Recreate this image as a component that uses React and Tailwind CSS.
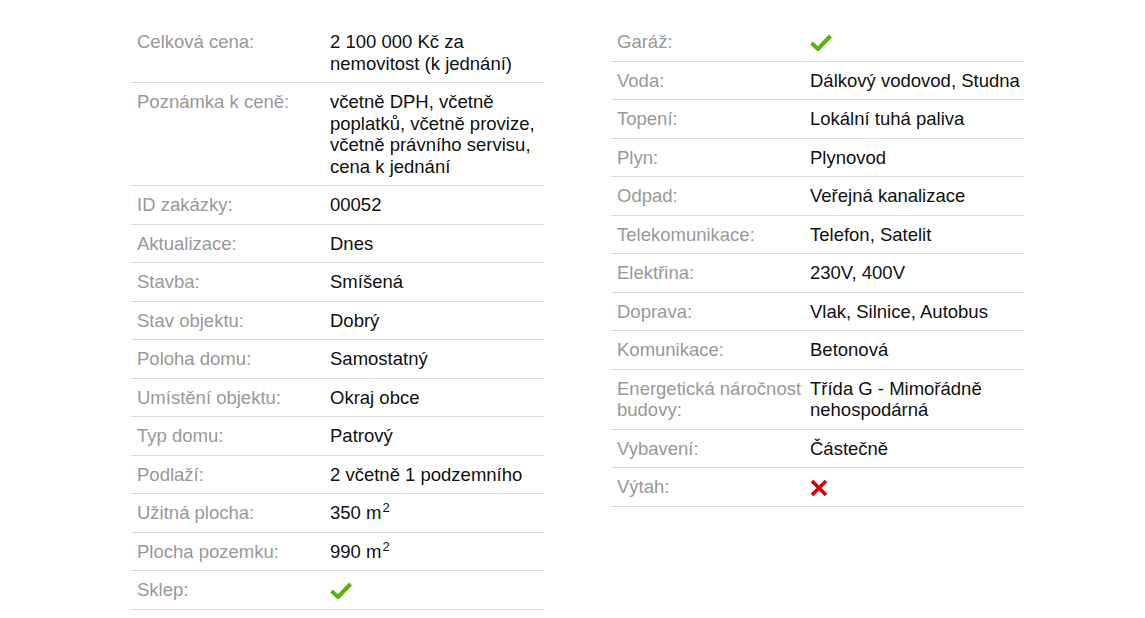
const Check = () => (
  <svg width="22" height="17" viewBox="0 0 22 17" className="mt-[3px]">
    <path d="M1.5 9 L8 15 L20.5 2" fill="none" stroke="#56b40c" strokeWidth="4" />
  </svg>
);

const Cross = () => (
  <svg width="18" height="18" viewBox="0 0 18 18" className="mt-[3px]">
    <path d="M2 2 L16 16 M16 2 L2 16" fill="none" stroke="#d30000" strokeWidth="3.6" />
  </svg>
);

const m2 = (n) => (
  <>
    {n} m<sup className="text-[13px] relative -top-[7px] ml-[1px]">2</sup>
  </>
);

const left = [
  ["Celková cena:", "2 100 000 Kč za nemovitost (k jednání)"],
  ["Poznámka k ceně:", "včetně DPH, včetně poplatků, včetně provize, včetně právního servisu, cena k jednání"],
  ["ID zakázky:", "00052"],
  ["Aktualizace:", "Dnes"],
  ["Stavba:", "Smíšená"],
  ["Stav objektu:", "Dobrý"],
  ["Poloha domu:", "Samostatný"],
  ["Umístění objektu:", "Okraj obce"],
  ["Typ domu:", "Patrový"],
  ["Podlaží:", "2 včetně 1 podzemního"],
  ["Užitná plocha:", m2(350)],
  ["Plocha pozemku:", m2(990)],
  ["Sklep:", <Check />],
];

const right = [
  ["Garáž:", <Check />],
  ["Voda:", "Dálkový vodovod, Studna"],
  ["Topení:", "Lokální tuhá paliva"],
  ["Plyn:", "Plynovod"],
  ["Odpad:", "Veřejná kanalizace"],
  ["Telekomunikace:", "Telefon, Satelit"],
  ["Elektřina:", "230V, 400V"],
  ["Doprava:", "Vlak, Silnice, Autobus"],
  ["Komunikace:", "Betonová"],
  ["Energetická náročnost budovy:", "Třída G - Mimořádně nehospodárná"],
  ["Vybavení:", "Částečně"],
  ["Výtah:", <Cross />],
];

const Table = ({ rows }) => (
  <div className="w-[413px]">
    {rows.map(([label, value], i) => (
      <div key={i} className="grid grid-cols-[199px_1fr] border-b border-[#dcdcdc] py-[8px]">
        <div className="pl-[6px] text-[#999999]">{label}</div>
        <div className="text-[#111111]">{value}</div>
      </div>
    ))}
  </div>
);

export default function App() {
  return (
    <div
      className="bg-white min-h-[618px] flex gap-[67px] pl-[131px] pt-[23px] text-[18.5px] leading-[21.5px]"
      style={{ fontFamily: "'Liberation Sans', Arial, sans-serif" }}
    >
      <Table rows={left} />
      <div>
        <Table rows={right} />
      </div>
    </div>
  );
}
